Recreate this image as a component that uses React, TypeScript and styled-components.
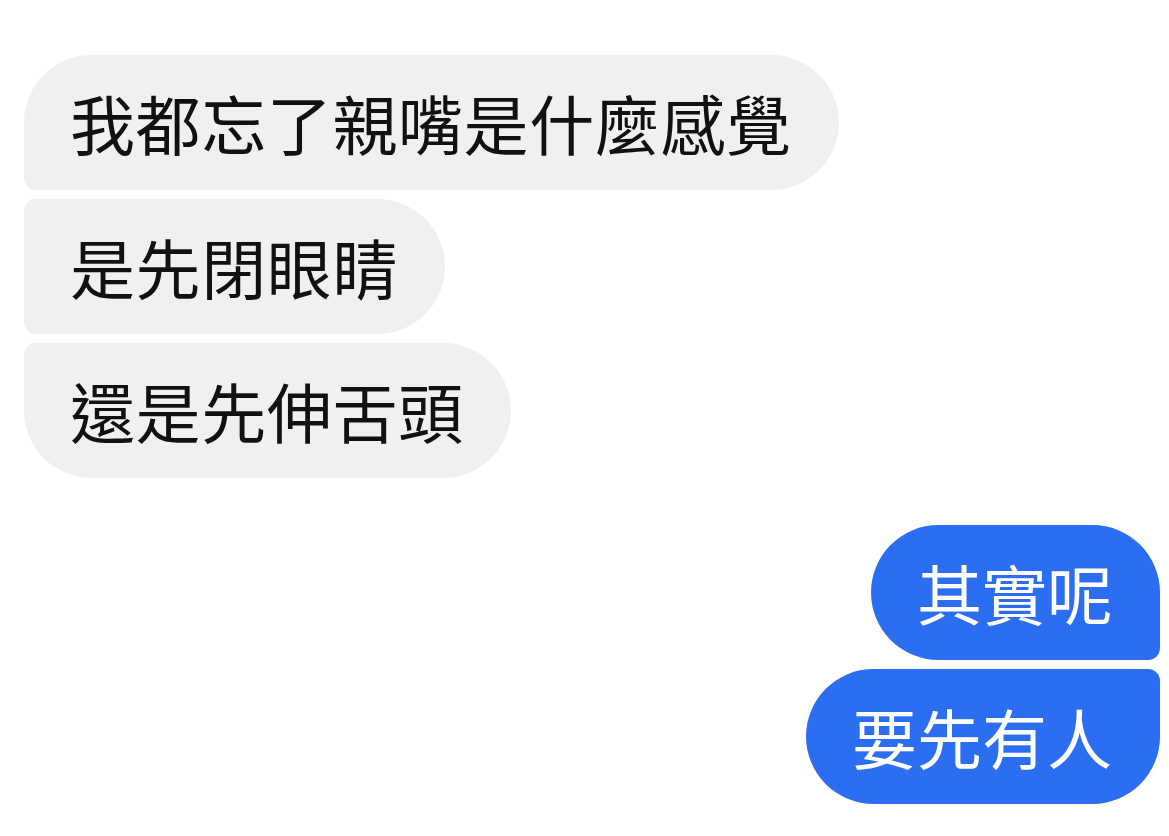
import styled, { createGlobalStyle } from "styled-components";

const GlobalStyle = createGlobalStyle`
  html, body {
    margin: 0;
    padding: 0;
    background: #fff;
  }
  body {
    font-family: "Noto Sans CJK TC", "Noto Sans CJK SC", "Noto Sans", sans-serif;
  }
`;

const Thread = styled.div`
  width: 1169px;
  height: 836px;
  box-sizing: border-box;
  padding: 55px 9px 0 24px;
  display: flex;
  flex-direction: column;
  overflow: hidden;
`;

const Group = styled.div<{ mine?: boolean }>`
  display: flex;
  flex-direction: column;
  align-items: ${(p) => (p.mine ? "flex-end" : "flex-start")};
  gap: 9px;
  margin-top: ${(p) => (p.mine ? "47px" : "0")};
`;

type Pos = "first" | "middle" | "last";

const BIG = "68px";
const SMALL = "12px";

function corners(mine: boolean, pos: Pos) {
  const top = pos === "first" ? BIG : SMALL;
  const bottom = pos === "last" ? BIG : SMALL;
  return mine
    ? `${BIG} ${top} ${bottom} ${BIG}`
    : `${top} ${BIG} ${BIG} ${bottom}`;
}

const Bubble = styled.div<{ mine?: boolean; pos: Pos }>`
  height: 135px;
  box-sizing: border-box;
  padding: ${(p) => (p.mine ? "0 48px 0 46px" : "0 47px 0 46px")};
  display: flex;
  align-items: center;
  font-size: 65px;
  letter-spacing: ${(p) => (p.mine ? "0" : "0.6px")};
  line-height: 1;
  white-space: nowrap;
  background: ${(p) => (p.mine ? "#2c6ef1" : "#f0f0f0")};
  color: ${(p) => (p.mine ? "#fff" : "#111")};
  border-radius: ${(p) => corners(!!p.mine, p.pos)};
`;

const theirs = ["我都忘了親嘴是什麼感覺", "是先閉眼睛", "還是先伸舌頭"];
const mine = ["其實呢", "要先有人"];

function posOf(i: number, n: number): Pos {
  if (i === 0) return "first";
  if (i === n - 1) return "last";
  return "middle";
}

export default function App() {
  return (
    <>
      <GlobalStyle />
      <Thread>
        <Group>
          {theirs.map((t, i) => (
            <Bubble key={t} pos={posOf(i, theirs.length)}>
              {t}
            </Bubble>
          ))}
        </Group>
        <Group mine>
          {mine.map((t, i) => (
            <Bubble key={t} mine pos={posOf(i, mine.length)}>
              {t}
            </Bubble>
          ))}
        </Group>
      </Thread>
    </>
  );
}
